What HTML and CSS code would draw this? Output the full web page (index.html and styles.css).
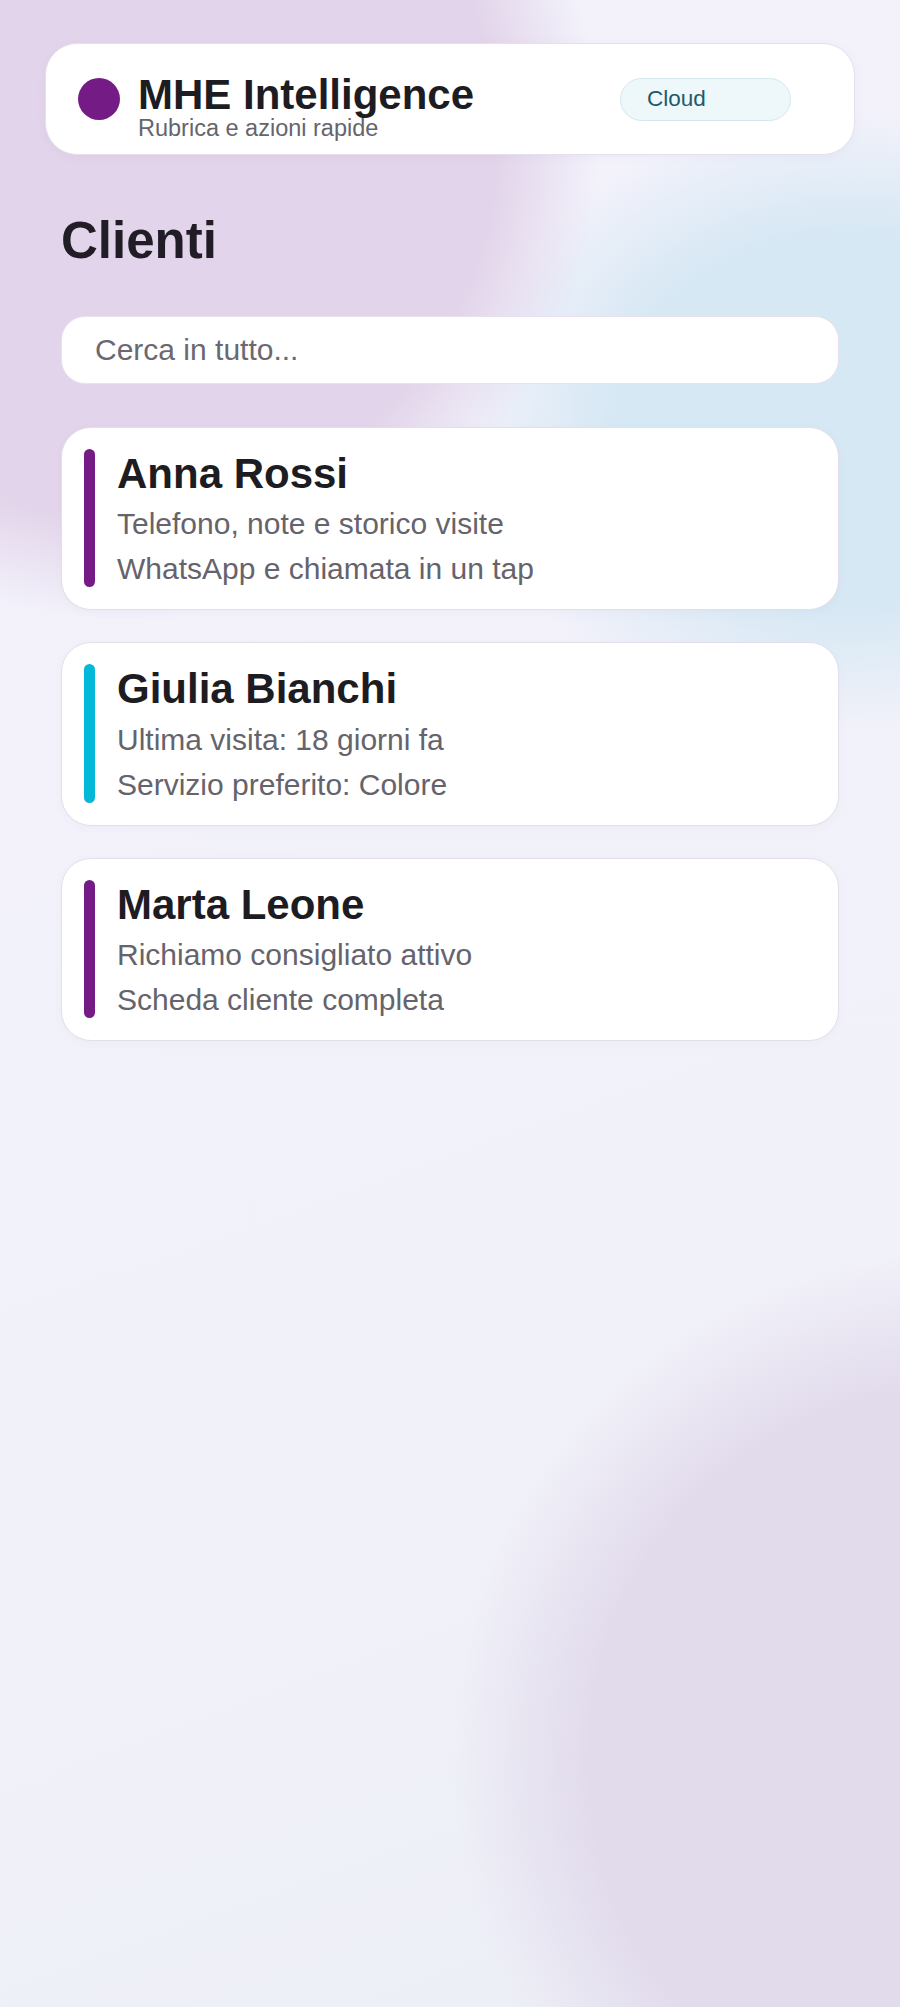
FILE: index.html
```html
<!DOCTYPE html>
<html lang="it">
<head>
<meta charset="utf-8">
<title>MHE Intelligence - Clienti</title>
<link rel="stylesheet" href="styles.css">
</head>
<body>
<header class="topbar">
  <span class="logo-dot"></span>
  <div class="brand">
    <div class="brand-title">MHE Intelligence</div>
    <div class="brand-sub">Rubrica e azioni rapide</div>
  </div>
  <span class="pill">Cloud</span>
</header>
<main class="content">
  <h1 class="page-title">Clienti</h1>
  <input class="search" type="text" placeholder="Cerca in tutto...">
  <section class="client-list">
    <article class="client-card">
      <span class="accent accent-purple"></span>
      <div class="client-info">
        <h2 class="client-name">Anna Rossi</h2>
        <p class="client-line">Telefono, note e storico visite</p>
        <p class="client-line">WhatsApp e chiamata in un tap</p>
      </div>
    </article>
    <article class="client-card">
      <span class="accent accent-cyan"></span>
      <div class="client-info">
        <h2 class="client-name">Giulia Bianchi</h2>
        <p class="client-line">Ultima visita: 18 giorni fa</p>
        <p class="client-line">Servizio preferito: Colore</p>
      </div>
    </article>
    <article class="client-card">
      <span class="accent accent-purple"></span>
      <div class="client-info">
        <h2 class="client-name">Marta Leone</h2>
        <p class="client-line">Richiamo consigliato attivo</p>
        <p class="client-line">Scheda cliente completa</p>
      </div>
    </article>
  </section>
</main>
</body>
</html>
```
FILE: styles.css
```css
html, body {
  margin: 0;
  padding: 0;
}

body {
  min-height: 2007px;
  font-family: "Liberation Sans", Arial, sans-serif;
  color: #1d1c22;
  background:
    radial-gradient(circle at 120px 140px, #e2d4ea 0, #e2d4ea 375px, rgba(226, 212, 234, 0) 480px),
    radial-gradient(ellipse 390px 310px at 850px 420px, #d6e8f4 0, #d6e8f4 60%, rgba(214, 232, 244, 0) 100%),
    radial-gradient(circle at 960px 1760px, #e2dbec 0, #e2dbec 370px, rgba(226, 219, 236, 0) 510px),
    linear-gradient(160deg, #f3f2fb 0%, #f1f1f9 70%, #eceff6 100%);
}

.topbar {
  box-sizing: border-box;
  height: 112px;
  margin: 43px 45px 0;
  padding: 0 63px 0 32px;
  display: flex;
  align-items: center;
  gap: 18px;
  background: #ffffff;
  border: 1px solid #e5e1ec;
  border-radius: 32px;
  box-shadow: 0 2px 10px rgba(120, 100, 150, 0.05);
}

.logo-dot {
  width: 42px;
  height: 42px;
  border-radius: 50%;
  background: #751b85;
  flex: none;
}

.brand {
  margin-top: 15px;
}

.brand-title {
  font-size: 42px;
  line-height: 42px;
  font-weight: 700;
  color: #1d1c22;
}

.brand-sub {
  font-size: 23.5px;
  line-height: 24px;
  color: #66646c;
}

.pill {
  box-sizing: border-box;
  margin-left: auto;
  width: 171px;
  height: 43px;
  padding-left: 26px;
  display: flex;
  align-items: center;
  font-size: 22.5px;
  color: #1e5a6b;
  background: #eef7fa;
  border: 1px solid #d3e8ee;
  border-radius: 22px;
}

.content {
  padding: 56px 61px 0;
}

.page-title {
  margin: 0 0 45px;
  font-size: 51px;
  line-height: 60px;
  font-weight: 700;
  color: #201d26;
}

.search {
  box-sizing: border-box;
  display: block;
  width: 100%;
  height: 68px;
  margin: 0;
  padding: 0 33px;
  font-family: "Liberation Sans", Arial, sans-serif;
  font-size: 30px;
  color: #1d1c22;
  background: #ffffff;
  border: 1px solid #e6e2ed;
  border-radius: 24px;
  outline: none;
}

.search::placeholder {
  color: #6a6870;
}

.client-list {
  margin-top: 43px;
  display: flex;
  flex-direction: column;
  gap: 32px;
}

.client-card {
  display: flex;
  gap: 22px;
  padding: 21px 22px 22px;
  background: #ffffff;
  border: 1px solid #e2dfe9;
  border-radius: 30px;
  box-shadow: 0 2px 8px rgba(120, 100, 150, 0.04);
}

.accent {
  flex: none;
  width: 11px;
  border-radius: 6px;
}

.accent-purple {
  background: #751b85;
}

.accent-cyan {
  background: #04b9d8;
}

.client-info {
  flex: 1;
}

.client-name {
  margin: 0 0 7px;
  font-size: 42px;
  line-height: 1.2;
  font-weight: 700;
  color: #1d1c22;
}

.client-line {
  margin: 0 0 9px;
  font-size: 30px;
  line-height: 1.2;
  color: #65636b;
}

.client-line:last-child {
  margin-bottom: 0;
}
```
